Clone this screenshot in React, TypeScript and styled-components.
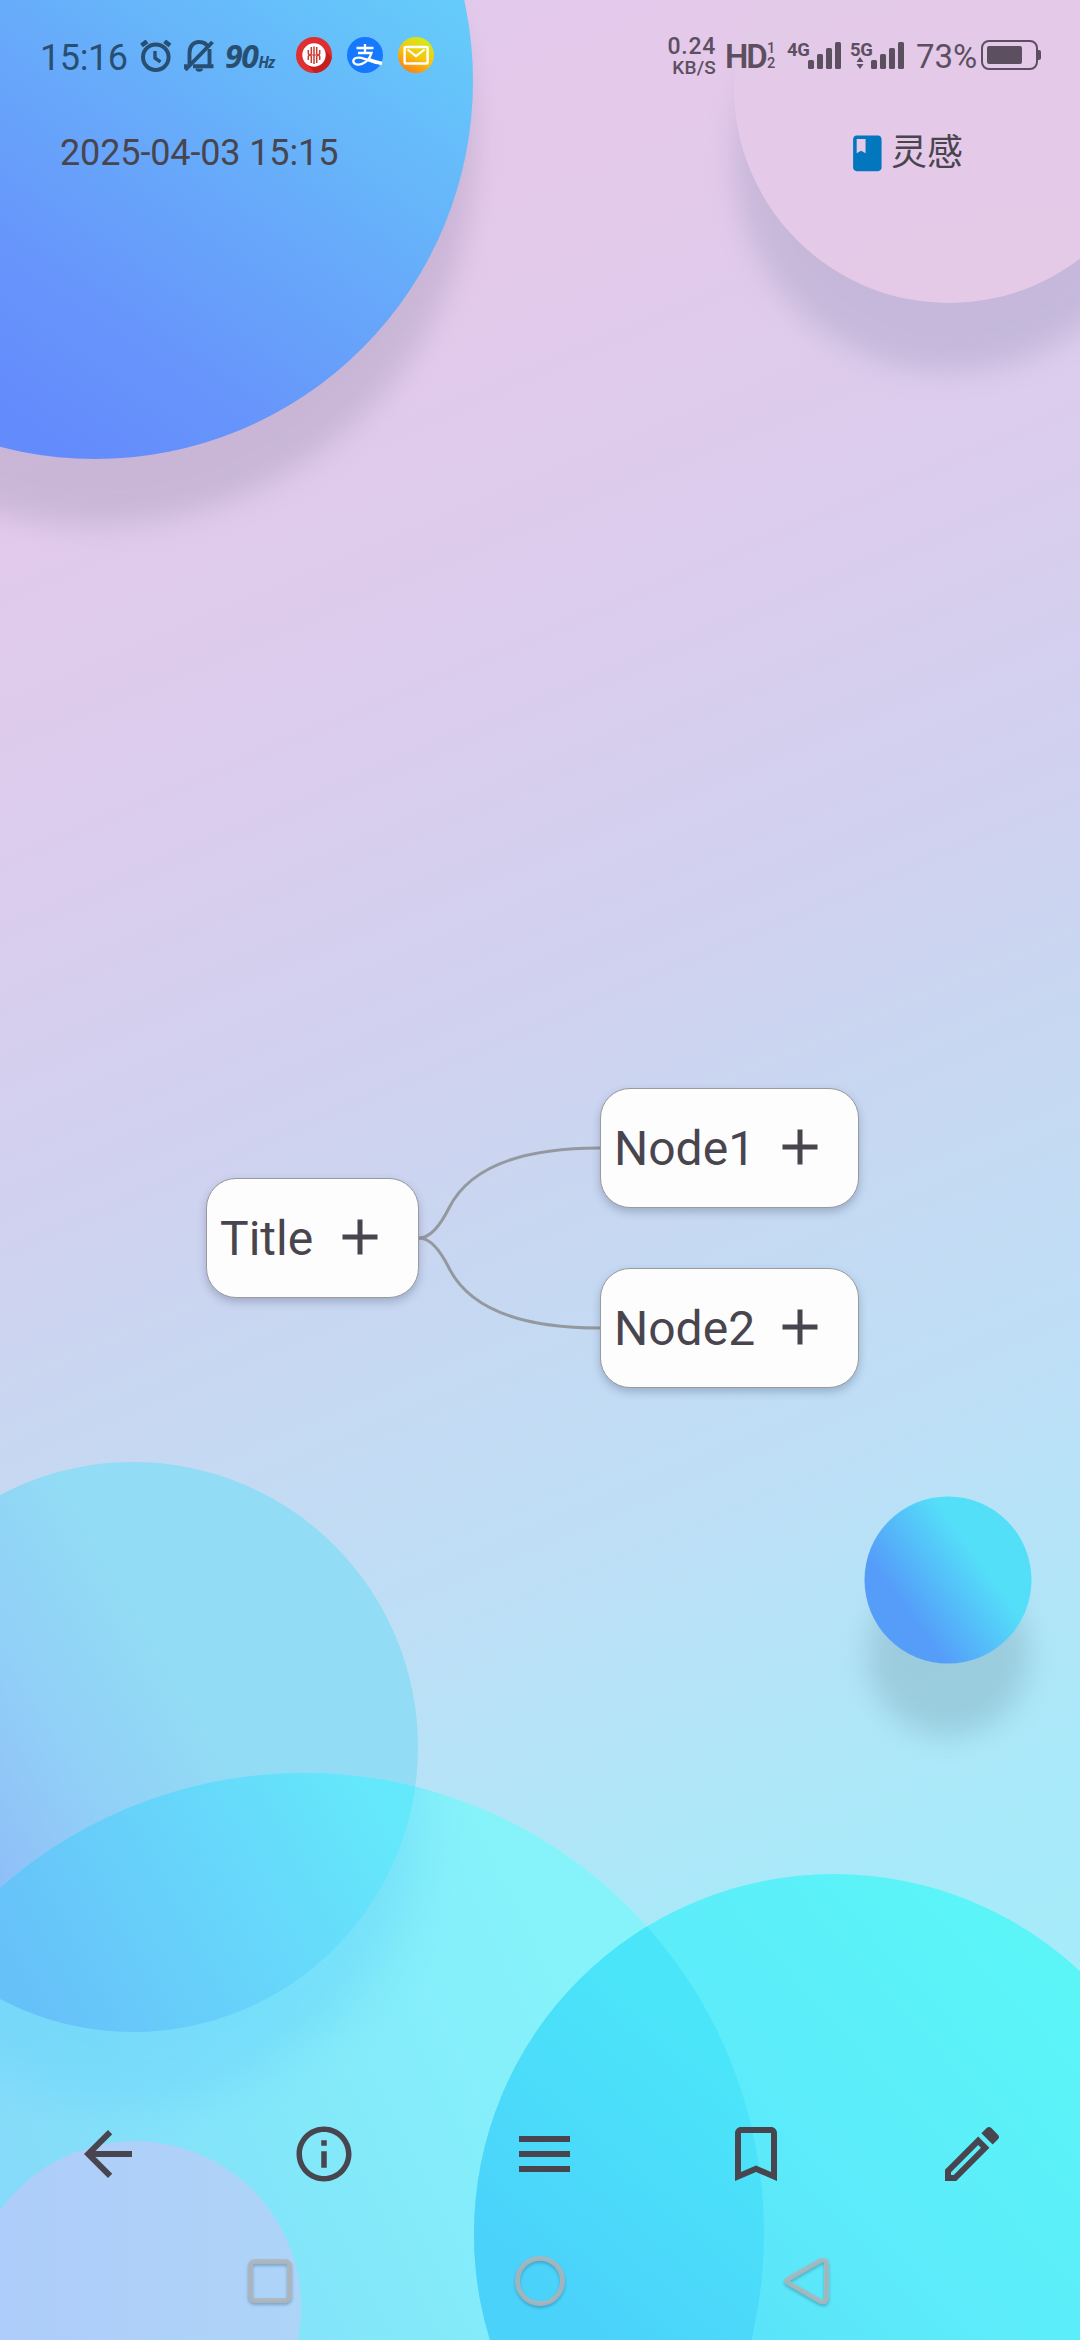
import React from "react";
import styled, { createGlobalStyle } from "styled-components";

const ink = "#49454f";
const statusLeft = "#284f72";
const statusRight = "#5c4f60";

const GlobalStyle = createGlobalStyle`
  html, body { margin: 0; padding: 0; }
  body { font-family: Roboto, "Noto Sans CJK SC", sans-serif; }
  svg { display: block; }
`;

const Screen = styled.div`
  position: relative;
  width: 1080px;
  height: 2340px;
  overflow: hidden;
  display: flex;
  flex-direction: column;
  color: ${ink};
  background: linear-gradient(
    157deg,
    #e2c9ee 0%,
    #e4c9ea 14%,
    #dccced 30%,
    #d1d1ef 43%,
    #c8d7f1 52%,
    #bddff6 65%,
    #a9e9f9 79%,
    #a0f0fa 100%
  );
`;

const WallpaperLayer = styled.svg`
  position: absolute;
  inset: 0;
`;

const StatusBar = styled.header`
  position: relative;
  display: flex;
  justify-content: space-between;
  align-items: flex-start;
  height: 110px;
  padding: 0 39px 0 40px;
`;

const StatusGroup = styled.div<{ $color: string }>`
  display: flex;
  align-items: flex-start;
  height: 110px;
  color: ${(p) => p.$color};
`;

const Cell = styled.div<{ $w: number; $top: number; $gap?: number }>`
  flex: none;
  width: ${(p) => p.$w}px;
  margin-left: ${(p) => p.$gap ?? 0}px;
  padding-top: ${(p) => p.$top}px;
  white-space: nowrap;
`;

const Label = styled.div<{ $size: number; $weight?: number; $spacing?: number; $align?: string }>`
  font-size: ${(p) => p.$size}px;
  line-height: ${(p) => p.$size}px;
  font-weight: ${(p) => p.$weight ?? 400};
  letter-spacing: ${(p) => p.$spacing ?? 0}px;
  text-align: ${(p) => p.$align ?? "left"};
`;

const RefreshRate = styled.div`
  display: flex;
  align-items: baseline;
  font-family: "Open Sans", "Noto Sans", sans-serif;
  font-weight: 700;
  font-style: italic;
  font-size: 32px;
  line-height: 32px;
  letter-spacing: -1.5px;
`;

const RateUnit = styled.span`
  font-size: 15.5px;
  letter-spacing: -1px;
  margin-left: 1px;
`;

const SignalBox = styled.div`
  position: relative;
  width: 54px;
  height: 30px;
`;

const SignalTag = styled.span`
  position: absolute;
  left: 0;
  top: -1.5px;
  font-size: 18.5px;
  line-height: 18px;
  font-weight: 700;
  letter-spacing: -0.4px;
`;

const Bars = styled.div`
  display: flex;
  align-items: flex-end;
  justify-content: flex-end;
  gap: 3px;
  height: 27px;
`;

const Bar = styled.div<{ $h: number }>`
  width: 6px;
  height: ${(p) => p.$h}px;
  border-radius: 1.5px;
  background: currentColor;
`;

const DataArrows = styled.svg`
  position: absolute;
  left: 6px;
  top: 15px;
`;

const BatteryRow = styled.div`
  display: flex;
  align-items: center;
`;

const BatteryShell = styled.div`
  box-sizing: border-box;
  width: 57px;
  height: 30px;
  border: 2px solid currentColor;
  border-radius: 8px;
  padding: 4px;
`;

const BatteryLevel = styled.div`
  width: 35px;
  height: 18px;
  border-radius: 2px;
  background: currentColor;
`;

const BatteryNub = styled.div`
  width: 3.5px;
  height: 10px;
  border-radius: 0 2px 2px 0;
  background: currentColor;
`;

const NoteHeader = styled.div`
  position: relative;
  display: flex;
  justify-content: space-between;
  align-items: center;
  height: 86px;
  padding: 0 117px 0 60px;
  font-size: 36px;
  line-height: 42px;
`;

const NoteDate = styled.span`
  letter-spacing: -0.13px;
`;

const Category = styled.div`
  display: flex;
  align-items: center;
  gap: 2px;
`;

const MapCanvas = styled.main`
  position: relative;
  flex: 1;
`;

const Links = styled.svg`
  position: absolute;
  left: 419px;
  top: 941px;
`;

const Node = styled.div<{ $x: number; $y: number; $w: number }>`
  position: absolute;
  left: ${(p) => p.$x}px;
  top: ${(p) => p.$y}px;
  box-sizing: border-box;
  width: ${(p) => p.$w}px;
  height: 120px;
  padding: 2px 28.5px 0 13px;
  border: 1px solid #989a9f;
  border-radius: 30px;
  background: #fdfdfd;
  box-shadow: 0 4px 9px rgba(40, 50, 80, 0.26);
  display: flex;
  align-items: center;
  justify-content: space-between;
  font-size: 48px;
  line-height: 56px;
  svg { margin-top: -3px; }
`;

const Toolbar = styled.nav`
  position: relative;
  display: grid;
  grid-template-columns: repeat(5, 216px);
  height: 72px;
  margin-bottom: 66px;
`;

const ToolButton = styled.div<{ $shift?: number }>`
  display: flex;
  align-items: center;
  justify-content: center;
  padding-left: ${(p) => p.$shift ?? 0}px;
`;

const SystemNav = styled.div`
  position: relative;
  display: grid;
  grid-template-columns: repeat(3, 270px);
  height: 48px;
  margin-bottom: 36px;
  padding: 0 135px;
  color: rgba(176, 182, 186, 0.85);
  svg { filter: drop-shadow(0 2px 1.5px rgba(30, 80, 110, 0.4)); overflow: visible; }
`;

const Wallpaper = () => (
  <WallpaperLayer width="1080" height="2340" viewBox="0 0 1080 2340">
    <defs>
      <linearGradient id="sky" gradientUnits="userSpaceOnUse" x1="60" y1="450" x2="390" y2="-30">
        <stop offset="0" stopColor="#648bfc" />
        <stop offset="0.25" stopColor="#6796fb" />
        <stop offset="0.55" stopColor="#67aafa" />
        <stop offset="1" stopColor="#65cbfa" />
      </linearGradient>
      <linearGradient id="blush" x1="0" y1="0" x2="0.3" y2="1">
        <stop offset="0.3" stopColor="#e4cae9" />
        <stop offset="1" stopColor="#e4cae7" />
      </linearGradient>
      <linearGradient id="mist" gradientUnits="userSpaceOnUse" x1="-40" y1="1850" x2="200" y2="1710">
        <stop offset="0" stopColor="#8fbcf8" />
        <stop offset="0.5" stopColor="#91cff7" />
        <stop offset="1" stopColor="#92dcf5" />
      </linearGradient>
      <linearGradient id="lagoon" gradientUnits="userSpaceOnUse" x1="0" y1="2150" x2="540" y2="1890">
        <stop offset="0" stopColor="#85dbf9" />
        <stop offset="0.5" stopColor="#83e9fa" />
        <stop offset="1" stopColor="#86f3fa" />
      </linearGradient>
      <linearGradient id="lens" gradientUnits="userSpaceOnUse" x1="40" y1="2010" x2="390" y2="1820">
        <stop offset="0" stopColor="#67c1f9" />
        <stop offset="0.5" stopColor="#67d4fa" />
        <stop offset="1" stopColor="#64e8fb" />
      </linearGradient>
      <linearGradient id="aqua" gradientUnits="userSpaceOnUse" x1="620" y1="2340" x2="1040" y2="1960">
        <stop offset="0" stopColor="#5adff9" />
        <stop offset="0.5" stopColor="#5cecfa" />
        <stop offset="1" stopColor="#5bf5f8" />
      </linearGradient>
      <linearGradient id="aquaLens" gradientUnits="userSpaceOnUse" x1="530" y1="2280" x2="720" y2="2060">
        <stop offset="0" stopColor="#4bd2fb" />
        <stop offset="1" stopColor="#4be5f9" />
      </linearGradient>
      <linearGradient id="lilac" x1="0" y1="0.5" x2="1" y2="0.5">
        <stop offset="0" stopColor="#aeccfa" />
        <stop offset="1" stopColor="#aed4f8" />
      </linearGradient>
      <linearGradient id="bead" gradientUnits="userSpaceOnUse" x1="908" y1="1612" x2="980" y2="1560">
        <stop offset="0" stopColor="#559df9" />
        <stop offset="1" stopColor="#54dff9" />
      </linearGradient>
      <filter id="soft" x="-20%" y="-20%" width="140%" height="140%">
        <feGaussianBlur stdDeviation="14" />
      </filter>
      <filter id="softer" x="-20%" y="-20%" width="140%" height="140%">
        <feGaussianBlur stdDeviation="22" />
      </filter>
      <clipPath id="bigClip"><circle cx="304" cy="2233" r="460" /></clipPath>
    </defs>

    <circle cx="97" cy="147" r="378" fill="#8c84a4" opacity="0.28" filter="url(#soft)" />
    <circle cx="95" cy="81" r="378" fill="url(#sky)" />

    <circle cx="949" cy="157" r="215" fill="#8488ac" opacity="0.27" filter="url(#soft)" />
    <circle cx="949" cy="88" r="215" fill="url(#blush)" />

    <circle cx="133" cy="1747" r="285" fill="url(#mist)" />
    <circle cx="304" cy="2233" r="460" fill="url(#lagoon)" />
    <g clipPath="url(#bigClip)">
      <circle cx="133" cy="1818" r="285" fill="#62cdfa" opacity="0.36" filter="url(#softer)" />
      <circle cx="133" cy="1747" r="285" fill="url(#lens)" />
    </g>

    <circle cx="834" cy="2234" r="360" fill="url(#aqua)" />
    <g clipPath="url(#bigClip)">
      <circle cx="834" cy="2234" r="360" fill="url(#aquaLens)" />
    </g>
    <circle cx="135" cy="2307" r="166" fill="url(#lilac)" />

    <circle cx="948" cy="1655" r="81" fill="#77a3b0" opacity="0.37" filter="url(#soft)" />
    <circle cx="948" cy="1580" r="83.5" fill="url(#bead)" />
  </WallpaperLayer>
);

const AlarmIcon = () => (
  <svg width="32" height="32" viewBox="0 0 32 32" fill="none" stroke="currentColor">
    <circle cx="15.8" cy="17.2" r="12.8" strokeWidth="4" />
    <path d="M1.5 5.5 7 1.3M30 5.5 24.6 1.3" strokeWidth="4.6" />
    <path d="M15 11v7l5.5 3.8" strokeWidth="3.4" />
  </svg>
);

const BellOffIcon = () => (
  <svg width="30" height="32" viewBox="0 0 30 32" fill="none" stroke="currentColor" strokeWidth="3.9">
    <path d="M5.5 24V13C5.500 6 9.500 2 15 2c4.500 0 8 2 9.300 6M25.500 9v17" />
    <path d="M1.300 30 28.500 2" />
    <path d="M9 26.200h20.500M0 26.200h4" />
    <path d="M11.500 28.500a3.700 3.300 0 0 0 7.400 0z" fill="currentColor" stroke="none" />
  </svg>
);

const MedalLogo = () => (
  <svg width="36" height="36" viewBox="0 0 36 36">
    <circle cx="18" cy="18" r="18" fill="#de3030" />
    <path d="M25.500 9.500 35.800 20A18 18 0 0 1 19 36L10 26z" fill="#c5201f" />
    <circle cx="18" cy="18" r="11.700" fill="#fff" />
    <g stroke="#c93a35" strokeWidth="1.500" fill="none">
      <path d="M18 9.500v17.500M15.300 10v6.500l-.8 1.500.8 1.500v6.500M20.700 10v6.500l.8 1.500-.8 1.500v6.500M12.300 13v3.500l.9 1.500-.9 1.500v3.500M23.700 13v3.500l-.9 1.500.9 1.500v3.500" />
      <path d="M13 18h10" strokeWidth="1" />
    </g>
  </svg>
);

const AlipayLogo = () => (
  <svg width="36" height="36" viewBox="0 0 36 36">
    <circle cx="18" cy="18" r="18" fill="#1677ff" />
    <g stroke="#fff" fill="none">
      <path d="M9.500 11h17M18 7v9" strokeWidth="2.300" />
      <path d="M11 16h13.500c-1.500 4.800-5 9.200-9.500 10.900-3.800 1.400-8.500.6-8.700-2.600-.1-3.200 4-4.400 8-3.400 5 1.200 10 3.600 16 5.200" strokeWidth="2.300" />
      <path d="M22 22.600c4 1.500 8.500 3 13 3.900" strokeWidth="3.600" />
    </g>
  </svg>
);

const MailLogo = () => (
  <svg width="36" height="36" viewBox="0 0 36 36">
    <defs>
      <linearGradient id="mailFill" x1="0.800" y1="0.100" x2="0.300" y2="1">
        <stop offset="0" stopColor="#d4ea18" />
        <stop offset="0.500" stopColor="#f6c50f" />
        <stop offset="1" stopColor="#fd7f12" />
      </linearGradient>
    </defs>
    <circle cx="18" cy="18" r="18" fill="url(#mailFill)" />
    <rect x="6.600" y="10" width="23" height="16.500" rx="1" fill="none" stroke="#fff" strokeWidth="2.400" />
    <path d="M9.500 12.500 18 19l8.500-6.500" fill="none" stroke="#fff" strokeWidth="2.200" />
  </svg>
);

const Glyph = ({ size, d }: { size: number; d: string }) => (
  <svg width={size} height={size} viewBox="0 0 24 24" fill="currentColor">
    <path d={d} />
  </svg>
);

const PlusIcon = () => <Glyph size={60} d="M19 13h-6v6h-2v-6H5v-2h6V5h2v6h6z" />;

const Signal = ({ tag, arrows }: { tag: string; arrows?: boolean }) => (
  <SignalBox>
    <SignalTag>{tag}</SignalTag>
    <Bars>
      {[9, 15, 21, 27].map((h) => (
        <Bar key={h} $h={h} />
      ))}
    </Bars>
    {arrows && (
      <DataArrows width="8" height="12" viewBox="0 0 8 12" fill="currentColor">
        <path d="M4 0 7.500 5h-7zM4 12 .5 7h7z" />
      </DataArrows>
    )}
  </SignalBox>
);

export default function App() {
  return (
    <Screen>
      <GlobalStyle />
      <Wallpaper />
      <StatusBar>
        <StatusGroup $color={statusLeft}>
          <Cell $w={90} $top={40}><Label $size={36} $spacing={-0.4}>15:16</Label></Cell>
          <Cell $w={32} $top={40} $gap={10}><AlarmIcon /></Cell>
          <Cell $w={30} $top={40} $gap={12}><BellOffIcon /></Cell>
          <Cell $w={54} $top={40} $gap={11}>
            <RefreshRate>90<RateUnit>Hz</RateUnit></RefreshRate>
          </Cell>
          <Cell $w={36} $top={37} $gap={17}><MedalLogo /></Cell>
          <Cell $w={36} $top={37} $gap={15}><AlipayLogo /></Cell>
          <Cell $w={36} $top={37} $gap={15}><MailLogo /></Cell>
        </StatusGroup>
        <StatusGroup $color={statusRight}>
          <Cell $w={50} $top={35}>
            <Label $size={23} $weight={500} $spacing={0.7} $align="right">0.24</Label>
            <Label $size={19} $weight={500} $spacing={0.2} $align="right">KB/S</Label>
          </Cell>
          <Cell $w={41} $top={40} $gap={9}>
            <Label $size={33} $weight={600} $spacing={-2}>HD</Label>
          </Cell>
          <Cell $w={10} $top={42} $gap={1}>
            <Label $size={14.500} $weight={500}>1</Label>
            <Label $size={14.500} $weight={500}>2</Label>
          </Cell>
          <Cell $w={54} $top={42} $gap={10}><Signal tag="4G" /></Cell>
          <Cell $w={54} $top={42} $gap={9}><Signal tag="5G" arrows /></Cell>
          <Cell $w={62} $top={40} $gap={12}><Label $size={33}>73%</Label></Cell>
          <Cell $w={60} $top={40} $gap={3}>
            <BatteryRow>
              <BatteryShell><BatteryLevel /></BatteryShell>
              <BatteryNub />
            </BatteryRow>
          </Cell>
        </StatusGroup>
      </StatusBar>

      <NoteHeader>
        <NoteDate>2025-04-03 15:15</NoteDate>
        <Category>
          <svg width="42.700" height="42.700" viewBox="0 0 24 24" fill="#0277bd">
            <path d="M18 2H6c-1.100 0-2 .9-2 2v16c0 1.100.9 2 2 2h12c1.100 0 2-.9 2-2V4c0-1.100-.9-2-2-2zM6 4h5v8l-2.500-1.500L6 12V4z" />
          </svg>
          <span>灵感</span>
        </Category>
      </NoteHeader>

      <MapCanvas>
        <Links width="182" height="200" viewBox="0 0 182 200" fill="none" stroke="#94999f" strokeWidth="3">
          <path d="M0 101Q15 101 30 71Q60 11 181 11" />
          <path d="M0 101Q15 101 30 131Q60 191 181 191" />
        </Links>
        <Node $x={206} $y={981.500} $w={213}><span>Title</span><PlusIcon /></Node>
        <Node $x={600} $y={891.500} $w={259}><span>Node1</span><PlusIcon /></Node>
        <Node $x={600} $y={1071.500} $w={259}><span>Node2</span><PlusIcon /></Node>
      </MapCanvas>

      <Toolbar>
        <ToolButton>
          <Glyph size={72} d="M20 11H7.830l5.590-5.590L12 4l-8 8 8 8 1.410-1.410L7.830 13H20v-2z" />
        </ToolButton>
        <ToolButton>
          <Glyph size={66} d="M11 7h2v2h-2zm0 4h2v6h-2zm1-9C6.480 2 2 6.480 2 12s4.480 10 10 10 10-4.480 10-10S17.520 2 12 2zm0 18c-4.410 0-8-3.590-8-8s3.590-8 8-8 8 3.590 8 8-3.590 8-8 8z" />
        </ToolButton>
        <ToolButton $shift={9}>
          <svg width="51" height="36" viewBox="0 0 51 36" fill="currentColor">
            <path d="M0 0h51v6H0zM0 15h51v6H0zM0 30h51v6H0z" />
          </svg>
        </ToolButton>
        <ToolButton>
          <Glyph size={72} d="M17 3H7c-1.100 0-1.990.9-1.990 2L5 21l7-3 7 3V5c0-1.100-.9-2-2-2zm0 15-5-2.180L7 18V5h10v13z" />
        </ToolButton>
        <ToolButton>
          <Glyph size={72} d="M14.060 9.020l.92.92L5.920 19H5v-.92l9.060-9.060M17.660 3c-.25 0-.51.1-.7.290l-1.830 1.830 3.750 3.750 1.830-1.830c.39-.39.39-1.020 0-1.410l-2.340-2.340c-.2-.2-.45-.29-.71-.29zm-3.600 3.190L3 17.250V21h3.750L17.810 9.940l-3.750-3.750z" />
        </ToolButton>
      </Toolbar>

      <SystemNav>
        <ToolButton>
          <svg width="44" height="44" viewBox="0 0 44 44" fill="none" stroke="currentColor" strokeWidth="5">
            <rect x="2.500" y="2.500" width="39" height="39" rx="4" />
          </svg>
        </ToolButton>
        <ToolButton>
          <svg width="50" height="50" viewBox="0 0 50 50" fill="none" stroke="currentColor" strokeWidth="5">
            <circle cx="25" cy="25" r="22.500" />
          </svg>
        </ToolButton>
        <ToolButton>
          <svg width="52" height="48" viewBox="0 0 52 48" fill="none" stroke="currentColor" strokeWidth="5" strokeLinejoin="round">
            <path d="M4.200 22.200 36 3.800Q42.500 1.500 42.500 7V41Q42.500 46.500 36 44.200L4.200 25.800Q1 24 4.200 22.200z" />
          </svg>
        </ToolButton>
      </SystemNav>
    </Screen>
  );
}
